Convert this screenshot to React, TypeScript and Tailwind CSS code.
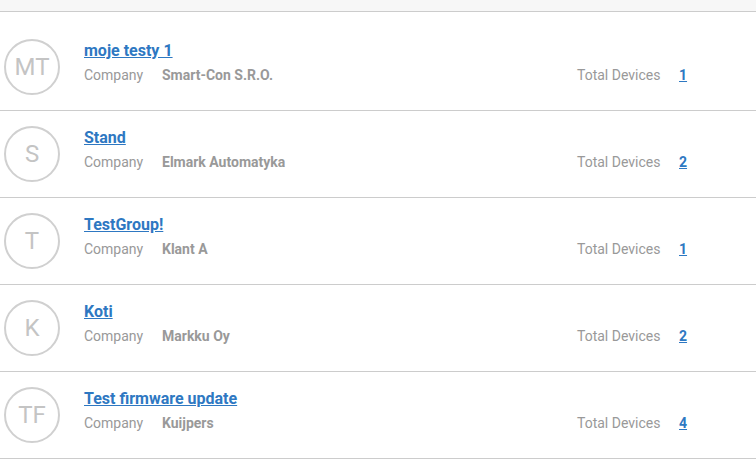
import React from "react";

const rows = [
  { initials: "MT", name: "moje testy 1", company: "Smart-Con S.R.O.", devices: 1 },
  { initials: "S", name: "Stand", company: "Elmark Automatyka", devices: 2 },
  { initials: "T", name: "TestGroup!", company: "Klant A", devices: 1 },
  { initials: "K", name: "Koti", company: "Markku Oy", devices: 2 },
  { initials: "TF", name: "Test firmware update", company: "Kuijpers", devices: 4 },
];

export default function App() {
  return (
    <div className="w-[756px] h-[463px] bg-white overflow-hidden" style={{ fontFamily: "Roboto, 'Liberation Sans', sans-serif" }}>
      <div className="h-[12px] bg-[#f7f7f7] border-b border-[#cccccc]" />
      <div className="pt-3">
        {rows.map((r) => (
          <div key={r.name} className="flex items-center h-[87px] border-b border-[#cccccc]">
            <div className="ml-1 w-14 h-14 rounded-full border-2 border-[#d0d0d0] flex items-center justify-center text-[24px] text-[#c4c4c4] shrink-0">
              {r.initials}
            </div>
            <div className="ml-6 flex-1 flex flex-col -mt-2">
              <a href="#" className="text-[16px] font-bold text-[#2e78c2] underline leading-5 w-fit">
                {r.name}
              </a>
              <div className="flex items-center mt-[4px] text-[14px] leading-5">
                <span className="w-[78px] text-[#999999]">Company</span>
                <span className="flex-1 font-bold text-[#999999]">{r.company}</span>
                <span className="w-[102px] text-[#999999]">Total Devices</span>
                <a href="#" className="w-[77px] font-bold text-[#2e78c2] underline">{r.devices}</a>
              </div>
            </div>
          </div>
        ))}
      </div>
    </div>
  );
}
